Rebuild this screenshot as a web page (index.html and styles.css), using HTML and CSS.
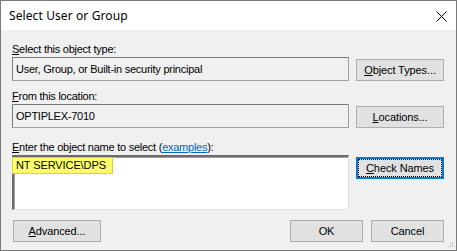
FILE: index.html
```html
<!DOCTYPE html>
<html>
<head>
<meta charset="utf-8">
<link rel="stylesheet" href="styles.css">
</head>
<body>
<div class="window">
  <div class="titlebar">
    <span class="title">Select User or Group</span>
    <svg class="close" width="11" height="11" viewBox="0 0 11 11"><path d="M0.5 0.5 L10.5 10.5 M10.5 0.5 L0.5 10.5" stroke="#000" stroke-width="1" fill="none"/></svg>
  </div>
  <div class="body">
    <div class="label l1"><u>S</u>elect this object type:</div>
    <div class="row">
      <div class="field ro">User, Group, or Built-in security principal</div>
      <button class="btn"><u>O</u>bject Types...</button>
    </div>
    <div class="label l2"><u>F</u>rom this location:</div>
    <div class="row">
      <div class="field ro">OPTIPLEX-7010</div>
      <button class="btn"><u>L</u>ocations...</button>
    </div>
    <div class="label l3"><u>E</u>nter the object name to select (<span class="link">examples</span>):</div>
    <div class="row top">
      <div class="field big"><span class="hl">NT SERVICE\DPS</span></div>
      <button class="btn focus"><u>C</u>heck Names</button>
    </div>
    <div class="footer">
      <button class="btn adv"><u>A</u>dvanced...</button>
      <div class="actions">
        <button class="btn small">OK</button>
        <button class="btn small">Cancel</button>
      </div>
    </div>
    <svg class="grip" width="7" height="7" viewBox="0 0 7 7">
      <rect x="5" y="1" width="1" height="1" fill="#b0b0b0"/>
      <rect x="3" y="3" width="1" height="1" fill="#b0b0b0"/>
      <rect x="5" y="3" width="1" height="1" fill="#b0b0b0"/>
      <rect x="1" y="5" width="1" height="1" fill="#b0b0b0"/>
      <rect x="3" y="5" width="1" height="1" fill="#b0b0b0"/>
      <rect x="5" y="5" width="1" height="1" fill="#b0b0b0"/>
    </svg>
  </div>
</div>
</body>
</html>
```

FILE: styles.css
```css
html, body {
  margin: 0;
  padding: 0;
  background: #fff;
}
.window {
  width: 457px;
  height: 251px;
  box-sizing: border-box;
  border: 1px solid #7a7a7a;
  display: flex;
  flex-direction: column;
  font-family: "Liberation Sans", Arial, sans-serif;
  font-size: 11px;
  letter-spacing: -0.25px;
  color: #000;
}
.titlebar {
  height: 29px;
  flex: none;
  background: #fff;
  display: flex;
  align-items: center;
  justify-content: space-between;
  padding: 0 9px 0 8px;
}
.title {
  font-family: "Noto Sans", sans-serif;
  font-size: 12px;
  letter-spacing: 0.1px;
  margin-top: -1px;
}
.close {
  display: block;
  margin-top: 1px;
}
.body {
  flex: 1;
  background: #f0f0f0;
  padding: 13px 12px 0 11px;
  position: relative;
}
.label {
  line-height: 13px;
  height: 13px;
  white-space: nowrap;
}
.l2 { margin-top: 9px; }
.l3 { margin-top: 13px; }
.link {
  color: #0066cc;
  text-decoration: underline;
}
.row {
  display: flex;
  align-items: flex-end;
  gap: 7px;
  margin-top: 1px;
}
.row.top {
  align-items: flex-start;
  margin-top: 1px;
}
.field {
  width: 337px;
  box-sizing: border-box;
}
.field.ro {
  height: 24px;
  border: 1px solid #7a7a7a;
  border-right-color: #a0a0a0;
  border-bottom-color: #a0a0a0;
  background: #f0f0f0;
  padding: 0 3px;
  line-height: 22px;
  white-space: nowrap;
}
.field.big {
  height: 55px;
  background: #fff;
  border-top: 2px solid #6b6b6b;
  border-left: 2px solid #6b6b6b;
  border-right: 1px solid #e3e3e3;
  border-bottom: 1px solid #e3e3e3;
  box-shadow: inset 1px 1px 0 #a0a0a0;
}
.hl {
  display: inline-block;
  margin: 0 0 0 -2px;
  background: #ffff6b;
  border: 1px solid #d8d048;
  padding: 0 6px 0 3px;
  height: 15px;
  line-height: 15px;
  letter-spacing: -0.1px;
}
.btn {
  font: inherit;
  letter-spacing: -0.1px;
  color: #000;
  background: #e1e1e1;
  border: 1px solid #adadad;
  width: 88px;
  height: 22px;
  padding: 0;
  margin: 0;
  box-sizing: border-box;
  line-height: 20px;
  text-align: center;
  flex: none;
}
.btn.focus {
  margin-top: 2px;
  border: 2px solid #0078d7;
  position: relative;
  line-height: 18px;
}
.btn.focus::after {
  content: "";
  position: absolute;
  inset: 0;
  border: 1px dotted #000;
}
.footer {
  display: flex;
  justify-content: space-between;
  margin-top: 10px;
  padding-left: 1px;
}
.actions {
  display: flex;
  gap: 8px;
}
.btn.small {
  width: 73px;
}
.grip {
  position: absolute;
  right: 2px;
  bottom: 2px;
}
```
